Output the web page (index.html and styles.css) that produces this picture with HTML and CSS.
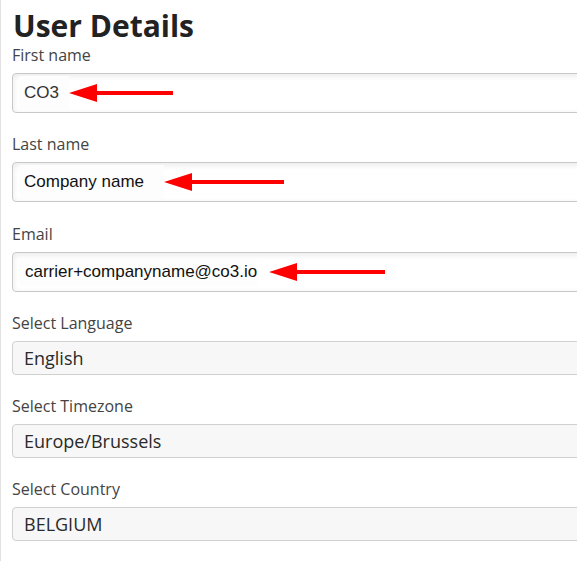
FILE: index.html
```html
<!DOCTYPE html>
<html lang="en">
<head>
<meta charset="utf-8">
<title>User Details</title>
<link rel="stylesheet" href="styles.css">
</head>
<body>
<div class="page">
  <h1 class="title">User Details</h1>

  <div class="field">
    <label class="label">First name</label>
    <div class="input">
      <span class="value value--first">CO3</span>
      <svg class="arrow arrow--first" width="104" height="20" viewBox="0 0 104 20"><path d="M0 10 L28 1 L28 8 L104 8 L104 12 L28 12 L28 19 Z" fill="#f00"/></svg>
    </div>
  </div>

  <div class="field field--last">
    <label class="label">Last name</label>
    <div class="input">
      <span class="value value--last">Company name</span>
      <svg class="arrow arrow--last" width="120" height="20" viewBox="0 0 120 20"><path d="M0 10 L28 1 L28 8 L120 8 L120 12 L28 12 L28 19 Z" fill="#f00"/></svg>
    </div>
  </div>

  <div class="field">
    <label class="label">Email</label>
    <div class="input">
      <span class="value value--email">carrier+companyname@co3.io</span>
      <svg class="arrow arrow--email" width="116" height="20" viewBox="0 0 116 20"><path d="M0 10 L28 1 L28 8 L116 8 L116 12 L28 12 L28 19 Z" fill="#f00"/></svg>
    </div>
  </div>

  <div class="field field--select">
    <label class="label">Select Language</label>
    <div class="select">English</div>
  </div>

  <div class="field field--select">
    <label class="label">Select Timezone</label>
    <div class="select">Europe/Brussels</div>
  </div>

  <div class="field field--select">
    <label class="label">Select Country</label>
    <div class="select">BELGIUM</div>
  </div>
</div>
</body>
</html>
```

FILE: styles.css
```css
html, body {
  margin: 0;
  padding: 0;
  background: #fff;
  overflow: hidden;
}

body {
  font-family: "Open Sans", "Liberation Sans", sans-serif;
  width: 577px;
  height: 561px;
  overflow: hidden;
}

.page {
  border-left: 1px solid #e2e2e2;
  height: 561px;
  width: 577px;
  overflow: hidden;
  padding: 8px 0 0 11px;
  box-sizing: border-box;
}

.title {
  margin: 0 0 0 1px;
  font-size: 30px;
  line-height: 36px;
  font-weight: 700;
  color: #222;
}

.field {
  display: flex;
  flex-direction: column;
  margin-bottom: 20px;
}

.field--last {
  margin-bottom: 21px;
}

.label {
  font-size: 16px;
  line-height: 22px;
  color: #444;
  margin-bottom: 7px;
}

.input {
  height: 40px;
  box-sizing: border-box;
  width: 600px;
  border: 1px solid #c8c8c8;
  border-radius: 4px;
  background: #fff;
  box-shadow: inset 0 2px 6px rgba(0, 0, 0, 0.09);
  display: flex;
  align-items: center;
  padding-left: 6px;
}

.value {
  font-family: "Liberation Sans", Arial, sans-serif;
  font-size: 17px;
  background: #fdfdfd;
  color: #111;
  padding: 7px 6px 7px 5px;
}

.value--first {
  color: #333;
  padding-right: 10px;
}

.value--last {
  padding-right: 20px;
}

.value--email {
  padding: 4px 0 4px 6px;
}

.arrow {
  display: block;
  flex: none;
}

.arrow--email {
  margin-left: 12px;
}

.select {
  height: 34px;
  box-sizing: border-box;
  width: 600px;
  border: 1px solid #d0d0d0;
  border-radius: 4px;
  background: #f7f7f7;
  font-size: 18px;
  line-height: 32px;
  color: #2a2a2a;
  padding-left: 11px;
}
```
